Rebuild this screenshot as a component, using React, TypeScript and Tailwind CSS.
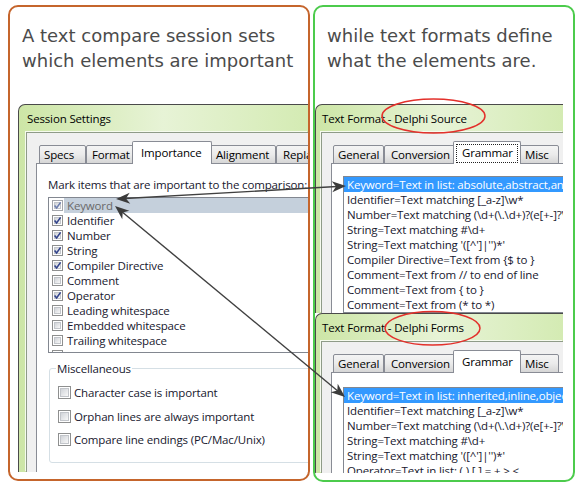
import React from "react";

const F = "font-['Open_Sans',sans-serif] text-[11.5px] tracking-[-0.15px]";

function CheckBox({ checked, big, dim }: { checked?: boolean; big?: boolean; dim?: boolean }) {
  return (
    <span
      className={
        (big ? "w-[13px] h-[13px] " : "w-[11px] h-[11px] ") +
        (dim ? "border-[#a3a6ab] " : "border-[#8e8f8f] ") +
        "relative shrink-0 border bg-white p-[1px] flex"
      }
    >
      <span className="flex-1 border border-[#c2c5ca] bg-linear-to-br from-[#d0d3d8] to-[#f8f8f8]" />
      {checked && (
        <svg className="absolute inset-0 w-full h-full" viewBox="0 0 9 9">
          <path
            d="M1.6 4.6 L3.6 7 L7.6 1.4"
            fill="none"
            stroke={dim ? "#6e7fae" : "#33448c"}
            strokeWidth={1.6}
          />
        </svg>
      )}
    </span>
  );
}

function Tab({ label, cls }: { label: string; cls: string }) {
  return (
    <div
      className={
        "h-[19px] border border-[#898c95] rounded-t-[2px] bg-linear-to-b from-[#f4f4f4] via-[#ebebeb] to-[#d6d6d6] flex items-center shrink-0 whitespace-nowrap overflow-hidden " +
        cls
      }
    >
      {label}
    </div>
  );
}

function SelTab({ label, cls, focus }: { label: string; cls: string; focus?: boolean }) {
  return (
    <div
      className={
        "relative z-10 h-[23px] border border-b-0 border-[#898c95] rounded-t-[2px] bg-white -mx-[2px] flex items-center shrink-0 whitespace-nowrap " +
        cls
      }
    >
      {focus && (
        <span className="absolute left-[2px] right-[2px] top-[2px] bottom-[1px] border border-dotted border-[#222]" />
      )}
      {label}
    </div>
  );
}

function Window({
  title,
  sizeCls,
  titleCls,
  frameCls,
  children,
}: {
  title: string;
  sizeCls: string;
  titleCls: string;
  frameCls: string;
  children: React.ReactNode;
}) {
  return (
    <div
      className={
        "overflow-hidden shrink-0 border-t border-l border-[#4a4a4a] rounded-tl-[7px] bg-linear-to-r from-[#cde6a6] via-[#e7f3d6] to-[#d4ebb3] flex flex-col " +
        sizeCls
      }
    >
      <div className={"h-[27px] shrink-0 flex items-center text-black " + F + " " + titleCls}>{title}</div>
      <div className={"flex-1 min-h-0 " + frameCls}>
        <div className="h-full border-t border-l border-[#8f9b88] bg-[#f0f0f0] pl-[9px] pt-[8px] shadow-[-1px_-1px_0_#f6fbee]">
          {children}
        </div>
      </div>
    </div>
  );
}

const leftItems: { label: string; checked: boolean }[] = [
  { label: "Keyword", checked: true },
  { label: "Identifier", checked: true },
  { label: "Number", checked: true },
  { label: "String", checked: true },
  { label: "Compiler Directive", checked: true },
  { label: "Comment", checked: false },
  { label: "Operator", checked: true },
  { label: "Leading whitespace", checked: false },
  { label: "Embedded whitespace", checked: false },
  { label: "Trailing whitespace", checked: false },
  { label: "Ignored text", checked: true },
];

const src = [
  "Keyword=Text in list: absolute,abstract,and,array,as,asm",
  "Identifier=Text matching [_a-z]\\w*",
  "Number=Text matching (\\d+(\\.\\d+)?(e[+-]?\\d+)?)",
  "String=Text matching #\\d+",
  "String=Text matching '([^']|'')*'",
  "Compiler Directive=Text from {$ to }",
  "Comment=Text from // to end of line",
  "Comment=Text from { to }",
  "Comment=Text from (* to *)",
];

const forms = [
  "Keyword=Text in list: inherited,inline,object,end",
  "Identifier=Text matching [_a-z]\\w*",
  "Number=Text matching (\\d+(\\.\\d+)?(e[+-]?\\d+)?)",
  "String=Text matching #\\d+",
  "String=Text matching '([^']|'')*'",
  "Operator=Text in list: ( ) [ ] = + > <",
];

function RightTabs() {
  return (
    <div className={"relative z-10 flex items-end h-[23px] -mb-px ml-[2px] text-black " + F}>
      <Tab label="General" cls="w-[51px] pl-[4px]" />
      <Tab label="Conversion" cls="w-[71px] pl-[6px]" />
      <SelTab label="Grammar" cls="w-[68px] pl-[8px]" focus />
      <Tab label="Misc" cls="w-[40px] pl-[5px]" />
    </div>
  );
}

function RightTabs2() {
  return (
    <div className={"relative z-10 flex items-end h-[23px] -mb-px ml-[2px] text-black " + F}>
      <Tab label="General" cls="w-[51px] pl-[4px]" />
      <Tab label="Conversion" cls="w-[71px] pl-[6px]" />
      <SelTab label="Grammar" cls="w-[68px] pl-[8px]" />
      <Tab label="Misc" cls="w-[40px] pl-[5px]" />
    </div>
  );
}

function GrammarList({ rows }: { rows: string[] }) {
  return (
    <div className={"w-[260px] border border-[#828790] bg-white overflow-hidden text-[#17172e] " + F}>
      {rows.map((r, i) => (
        <div
          key={i}
          className={
            "h-[15px] flex items-center whitespace-nowrap pl-[3px] " + (i === 0 ? "bg-[#3399ff] text-white" : "")
          }
        >
          {r}
        </div>
      ))}
    </div>
  );
}

function head(t: [number, number], f: [number, number]) {
  const dx = t[0] - f[0];
  const dy = t[1] - f[1];
  const L = Math.hypot(dx, dy);
  const ux = dx / L;
  const uy = dy / L;
  const nx = -uy;
  const ny = ux;
  const len = 14;
  const w = 5.5;
  const back = 10;
  return `${t[0]},${t[1]} ${t[0] - len * ux + w * nx},${t[1] - len * uy + w * ny} ${t[0] - back * ux},${
    t[1] - back * uy
  } ${t[0] - len * ux - w * nx},${t[1] - len * uy - w * ny}`;
}

function Arrow({ a, b }: { a: [number, number]; b: [number, number] }) {
  const dx = b[0] - a[0];
  const dy = b[1] - a[1];
  const L = Math.hypot(dx, dy);
  const ux = dx / L;
  const uy = dy / L;
  return (
    <g>
      <line
        x1={a[0] + 9 * ux}
        y1={a[1] + 9 * uy}
        x2={b[0] - 9 * ux}
        y2={b[1] - 9 * uy}
        stroke="#404040"
        strokeWidth={1.4}
      />
      <polygon points={head(a, b)} fill="#3b3b3b" />
      <polygon points={head(b, a)} fill="#3b3b3b" />
    </g>
  );
}

export default function App() {
  return (
    <div className="relative w-[580px] h-[490px] bg-white flex items-start pt-[5px] pl-[8px] gap-[3px] overflow-hidden">
      {/* Left box */}
      <div className="w-[302px] h-[476px] shrink-0 border-2 border-[#c5652c] rounded-[10px] overflow-hidden">
        <div className="pt-[16px] pl-[12px] text-[18px] leading-[25px] font-['DejaVu_Sans',sans-serif] text-[#4b4b4b]">
          <div>A text compare session sets</div>
          <div>which elements are important</div>
        </div>
        <div className="mt-[31px] ml-[8px]">
          <Window title="Session Settings" sizeCls="w-[290px] h-[368px]" titleCls="pl-[8px]" frameCls="pl-[7px]">
            <div className={"relative z-10 flex items-end h-[23px] -mb-px ml-[3px] text-black " + F}>
              <Tab label="Specs" cls="w-[47px] pl-[4px]" />
              <Tab label="Format" cls="w-[48px] pl-[5px]" />
              <SelTab label="Importance" cls="w-[80px] pl-[8px]" />
              <Tab label="Alignment" cls="w-[66px] pl-[5px]" />
              <Tab label="Replace" cls="w-[70px] pl-[6px]" />
            </div>
            <div className={"w-[300px] h-[330px] border border-[#898c95] bg-white pl-[11px] pt-[13px] text-[#17172e] " + F}>
              <div className="h-[15px] leading-[15px] whitespace-nowrap">
                Mark items that are important to the comparison:
              </div>
              <div className="mt-[5px] h-[156px] w-[300px] border border-[#828790] bg-white overflow-hidden">
                {leftItems.map((it, i) => (
                  <div key={i} className="h-[15px] flex items-center pl-[3px] whitespace-nowrap">
                    <CheckBox checked={it.checked} dim={i === 0} />
                    <span
                      className={
                        "ml-[1px] h-[15px] flex-1 flex items-center pl-[3px] " +
                        (i === 0 ? "bg-[#c5d0dc] text-[#6a6a6a]" : "")
                      }
                    >
                      {it.label}
                    </span>
                  </div>
                ))}
              </div>
              <fieldset className="mt-[8px] ml-px w-[300px] border border-[#d5dfe5] rounded-[3px] p-0 pb-[10px]">
                <legend className="ml-[6px] px-[1px] leading-[15px] h-[15px]">Miscellaneous</legend>
                <div className="pt-[5px] pl-[8px]">
                  {[
                    "Character case is important",
                    "Orphan lines are always important",
                    "Compare line endings (PC/Mac/Unix)",
                  ].map((t) => (
                    <div key={t} className="h-[23.5px] flex items-center gap-[3px] whitespace-nowrap">
                      <CheckBox big />
                      <span>{t}</span>
                    </div>
                  ))}
                </div>
              </fieldset>
            </div>
          </Window>
        </div>
      </div>

      {/* Right box */}
      <div className="w-[262px] h-[477px] shrink-0 border-2 border-[#4ccb4c] rounded-[10px] overflow-hidden">
        <div className="pt-[16px] pl-[12px] text-[18px] leading-[25px] font-['DejaVu_Sans',sans-serif] text-[#4b4b4b]">
          <div>while text formats define</div>
          <div>what the elements are.</div>
        </div>
        <div className="mt-[31px] flex flex-col">
          <Window
            title="Text Format - Delphi Source"
            sizeCls="w-[248px] h-[209px]"
            titleCls="pl-[6px]"
            frameCls="pl-[5px]"
          >
            <RightTabs />
            <div className="w-[260px] h-[200px] border border-[#898c95] bg-white pl-[11px] pt-[12px]">
              <GrammarList rows={src} />
            </div>
          </Window>
          <Window
            title="Text Format - Delphi Forms"
            sizeCls="w-[248px] h-[160px]"
            titleCls="pl-[6px]"
            frameCls="pl-[5px]"
          >
            <RightTabs2 />
            <div className="w-[260px] h-[200px] border border-[#898c95] bg-white pl-[11px] pt-[14px]">
              <GrammarList rows={forms} />
            </div>
          </Window>
        </div>
      </div>

      {/* Overlay annotations */}
      <svg className="absolute left-0 top-0 pointer-events-none" width={580} height={490} viewBox="0 0 580 490">
        <ellipse cx={433.5} cy={116} rx={51.5} ry={17} fill="none" stroke="#e3302b" strokeWidth={1.5} />
        <ellipse cx={432.5} cy={328.3} rx={47.5} ry={16.7} fill="none" stroke="#e3302b" strokeWidth={1.5} />
        <Arrow a={[116, 199]} b={[346, 186]} />
        <Arrow a={[115, 206]} b={[345, 397]} />
      </svg>
    </div>
  );
}
